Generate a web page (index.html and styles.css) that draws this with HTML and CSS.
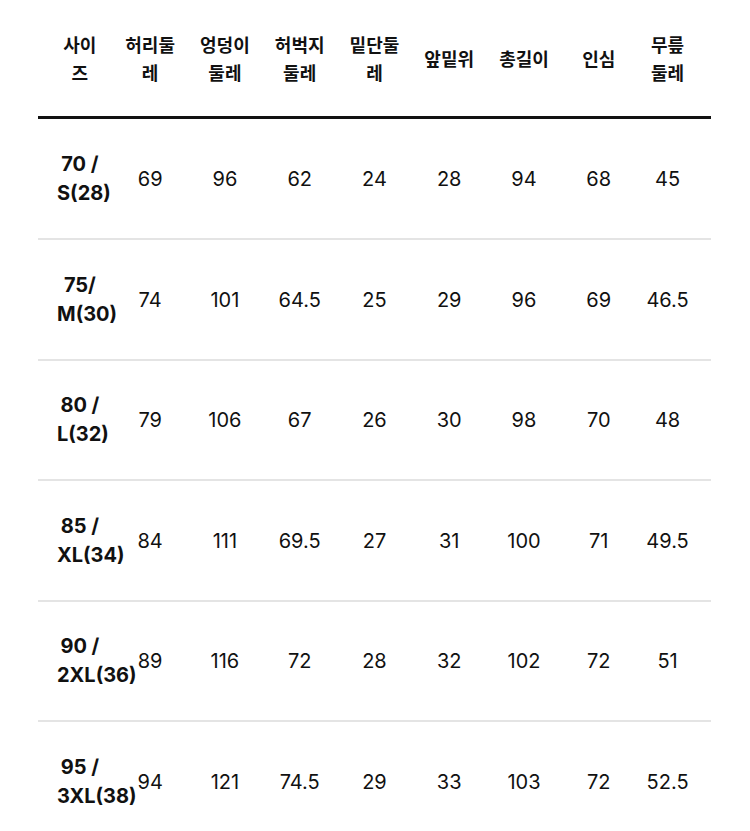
FILE: index.html
```html
<!DOCTYPE html>
<html lang="ko">
<head>
<meta charset="utf-8">
<link rel="stylesheet" href="styles.css">
</head>
<body>
<table class="size-table">
  <thead>
    <tr>
      <th class="size">사이즈</th>
      <th>허리둘레</th>
      <th>엉덩이둘레</th>
      <th>허벅지둘레</th>
      <th>밑단둘레</th>
      <th>앞밑위</th>
      <th>총길이</th>
      <th>인심</th>
      <th class="last">무릎 둘레</th>
    </tr>
  </thead>
  <tbody>
    <tr><td class="size">70 / S(28)</td><td>69</td><td>96</td><td>62</td><td>24</td><td>28</td><td>94</td><td>68</td><td class="last">45</td></tr>
    <tr><td class="size">75/ M(30)</td><td>74</td><td>101</td><td>64.5</td><td>25</td><td>29</td><td>96</td><td>69</td><td class="last">46.5</td></tr>
    <tr class="short"><td class="size">80 / L(32)</td><td>79</td><td>106</td><td>67</td><td>26</td><td>30</td><td>98</td><td>70</td><td class="last">48</td></tr>
    <tr><td class="size">85 / XL(34)</td><td>84</td><td>111</td><td>69.5</td><td>27</td><td>31</td><td>100</td><td>71</td><td class="last">49.5</td></tr>
    <tr class="short"><td class="size">90 / 2XL(36)</td><td>89</td><td>116</td><td>72</td><td>28</td><td>32</td><td>102</td><td>72</td><td class="last">51</td></tr>
    <tr><td class="size">95 / 3XL(38)</td><td>94</td><td>121</td><td>74.5</td><td>29</td><td>33</td><td>103</td><td>72</td><td class="last">52.5</td></tr>
  </tbody>
</table>
</body>
</html>
```
FILE: styles.css
```css
html, body {
  margin: 0;
  padding: 0;
  background: #fff;
}
body {
  font-family: Inter, "Noto Sans CJK KR", sans-serif;
  color: #111;
}
.size-table {
  margin-left: 38px;
  width: 673px;
  table-layout: fixed;
  border-collapse: collapse;
  border-spacing: 0;
}
.size-table th {
  font-family: "Noto Sans CJK KR", sans-serif;
  font-size: 18px;
  font-weight: 700;
  line-height: 28px;
  padding: 30px 8px;
  height: 56px;
  text-align: center;
  vertical-align: middle;
  border-bottom: 3px solid #111;
  color: #111;
}
.size-table td {
  font-size: 20px;
  font-weight: 400;
  line-height: 29px;
  padding: 31px 8px 30px;
  height: 58px;
  text-align: center;
  vertical-align: middle;
  border-bottom: 2px solid #e4e4e4;
  color: #111;
}
.size-table tr.short td {
  padding-top: 30px;
}
.size-table th.size,
.size-table td.size {
  padding-left: 19px;
  padding-right: 10px;
}
.size-table td.size {
  font-weight: 700;
}
.size-table th.last,
.size-table td.last {
  padding-left: 6px;
  padding-right: 18px;
}
```
